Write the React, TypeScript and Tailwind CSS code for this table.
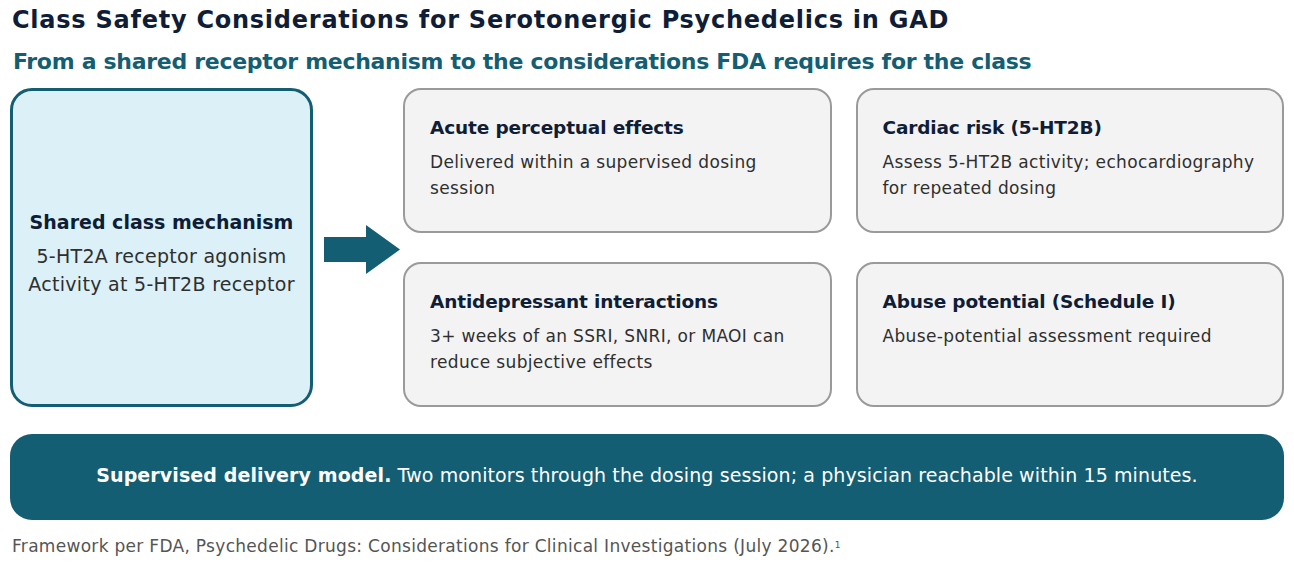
import React from "react";

const font = { fontFamily: '"DejaVu Sans", "Noto Sans", sans-serif' };

function Card({ title, body }: { title: string; body: React.ReactNode }) {
  return (
    <div className="h-[145px] rounded-[18px] border-2 border-[#9a9a9a] bg-[#f3f3f3] pl-[25px] pr-[20px] pt-[24px]">
      <div className="text-[18.5px] font-bold leading-[28px] tracking-[-0.15px] text-[#0f1d36]">{title}</div>
      <div className="mt-[7px] text-[17px] leading-[26px] tracking-[0.35px] text-[#2f2f2f]">{body}</div>
    </div>
  );
}

export default function App() {
  return (
    <div className="w-[1294px] h-[564px] bg-white px-[10px] pt-[4px]" style={font}>
      <div className="pl-[2px] text-[24px] font-bold leading-[32px] tracking-[0.75px] text-[#0f1d36]">
        Class Safety Considerations for Serotonergic Psychedelics in GAD
      </div>
      <div className="pl-[3px] mt-[11px] text-[22px] font-bold leading-[30px] tracking-[-0.3px] text-[#145e73]">
        From a shared receptor mechanism to the considerations FDA requires for the class
      </div>
      <div className="mt-[11px] flex">
        <div className="flex h-[319px] w-[303px] flex-col items-center justify-center rounded-[22px] border-[3px] border-[#145e73] bg-[#dbf0f7] pt-[10px] text-center">
          <div className="text-[19px] font-bold leading-[28px] text-[#0f1d36]">Shared class mechanism</div>
          <div className="mt-[6px] text-[19px] leading-[28px] tracking-[0.3px] text-[#2f2f2f]">5-HT2A receptor agonism</div>
          <div className="text-[19px] leading-[28px] tracking-[0.3px] text-[#2f2f2f]">Activity at 5-HT2B receptor</div>
        </div>
        <div className="flex w-[90px] items-center justify-start pl-[11px] pt-[3px]">
          <svg width="76" height="49" viewBox="0 0 76 49">
            <polygon points="0,12 42,12 42,0 76,24.5 42,49 42,37 0,37" fill="#145e73" />
          </svg>
        </div>
        <div className="grid flex-1 grid-cols-2 gap-x-[24px] gap-y-[28px]">
          <Card title="Acute perceptual effects" body={<>Delivered within a supervised dosing<br />session</>} />
          <Card title="Cardiac risk (5-HT2B)" body={<>Assess 5-HT2B activity; echocardiography<br />for repeated dosing</>} />
          <Card title="Antidepressant interactions" body={<>3+ weeks of an SSRI, SNRI, or MAOI can<br />reduce subjective effects</>} />
          <Card title="Abuse potential (Schedule I)" body="Abuse-potential assessment required" />
        </div>
      </div>
      <div className="mt-[27px] flex h-[86px] items-center justify-center rounded-[22px] bg-[#145e73] pb-[3px] text-[19px] tracking-[0.1px] text-white">
        <span className="font-bold">Supervised delivery model.</span>
        <span>&nbsp;Two monitors through the dosing session; a physician reachable within 15 minutes.</span>
      </div>
      <div className="mt-[14px] pl-[2px] text-[17px] leading-[24px] tracking-[0.3px] text-[#555555]">
        Framework per FDA, Psychedelic Drugs: Considerations for Clinical Investigations (July 2026).
        <sup className="text-[9px]">1</sup>
      </div>
    </div>
  );
}
